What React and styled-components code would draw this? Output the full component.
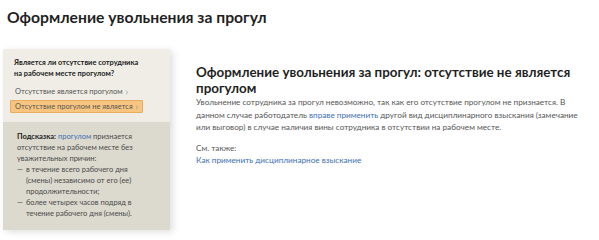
import React from 'react'
import styled, { createGlobalStyle } from 'styled-components'

const GlobalStyle = createGlobalStyle`
  body {
    margin: 0;
    background: #ffffff;
    font-family: Lato, "Liberation Sans", sans-serif;
  }
`

const Page = styled.div`
  width: 599px;
  height: 240px;
  overflow: hidden;
  padding: 7px 0 0 3px;
  box-sizing: border-box;
`

const Title = styled.h1`
  margin: 0 0 0 4px;
  font-size: 15.7px;
  line-height: 20px;
  font-weight: 700;
  color: #1f1f1f;
`

const Layout = styled.div`
  display: flex;
  margin-top: 22px;
  gap: 26px;
`

const Sidebar = styled.aside`
  width: 167px;
  flex-shrink: 0;
  box-shadow: 3px 2px 7px rgba(0, 0, 0, 0.13);
`

const QuestionBlock = styled.div`
  background: #efede5;
  padding: 8px 8px 9px 7px;
`

const Question = styled.div`
  width: 128px;
  font-size: 7.4px;
  line-height: 11px;
  font-weight: 700;
  color: #222;
  padding-left: 4px;
  margin-bottom: 6px;
`

const Option = styled.div`
  display: flex;
  width: fit-content;
  align-items: center;
  gap: 3px;
  font-size: 7.5px;
  line-height: 11px;
  color: #555;
  padding: 0 4px;
  margin-top: 2px;
  background: ${p => (p.$active ? '#f7c57f' : 'transparent')};
  border: 1px solid ${p => (p.$active ? '#e7ad60' : 'transparent')};
  border-radius: 1px;
`

const Chevron = styled.span`
  color: #999;
  font-size: 9px;
`

const HintBlock = styled.div`
  background: #dcd9ce;
  padding: 8.5px 22px 11.5px 14px;
  font-size: 7.5px;
  line-height: 11px;
  color: #4a4a4a;
`

const HintLabel = styled.b`
  color: #222;
`

const HintList = styled.ul`
  list-style: none;
  margin: 0;
  padding: 0;
`

const HintItem = styled.li`
  display: flex;
  gap: 3px;
`

const Dash = styled.span`
  flex-shrink: 0;
`

const Link = styled.a`
  color: #3d6fb5;
  text-decoration: none;
`

const Main = styled.main`
  padding-top: 15px;
  width: 395px;
`

const Heading = styled.h2`
  margin: 0;
  font-size: 13.4px;
  line-height: 16px;
  font-weight: 700;
  color: #1f1f1f;
`

const Paragraph = styled.p`
  margin: 0 0 8px;
  font-size: 8.2px;
  line-height: 12.5px;
  color: #555;
`

const SeeAlso = styled.div`
  font-size: 8.2px;
  line-height: 12px;
  color: #555;
`

export default function App() {
  return (
    <Page>
      <GlobalStyle />
      <Title>Оформление увольнения за прогул</Title>
      <Layout>
        <Sidebar>
          <QuestionBlock>
            <Question>Является ли отсутствие сотрудника на рабочем месте прогулом?</Question>
            <Option>Отсутствие является прогулом <Chevron>›</Chevron></Option>
            <Option $active>Отсутствие прогулом не является <Chevron>›</Chevron></Option>
          </QuestionBlock>
          <HintBlock>
            <HintLabel>Подсказка:</HintLabel> <Link>прогулом</Link> признается отсутствие на рабочем месте без уважительных причин:
            <HintList>
              <HintItem><Dash>—</Dash><span>в течение всего рабочего дня (смены) независимо от его (ее) продолжительности;</span></HintItem>
              <HintItem><Dash>—</Dash><span>более четырех часов подряд в течение рабочего дня (смены).</span></HintItem>
            </HintList>
          </HintBlock>
        </Sidebar>
        <Main>
          <Heading>Оформление увольнения за прогул: отсутствие не является прогулом</Heading>
          <Paragraph>
            Увольнение сотрудника за прогул невозможно, так как его отсутствие прогулом не признается. В данном случае работодатель <Link>вправе применить</Link> другой вид дисциплинарного взыскания (замечание или выговор) в случае наличия вины сотрудника в отсутствии на рабочем месте.
          </Paragraph>
          <SeeAlso>См. также:</SeeAlso>
          <SeeAlso><Link>Как применить дисциплинарное взыскание</Link></SeeAlso>
        </Main>
      </Layout>
    </Page>
  )
}
